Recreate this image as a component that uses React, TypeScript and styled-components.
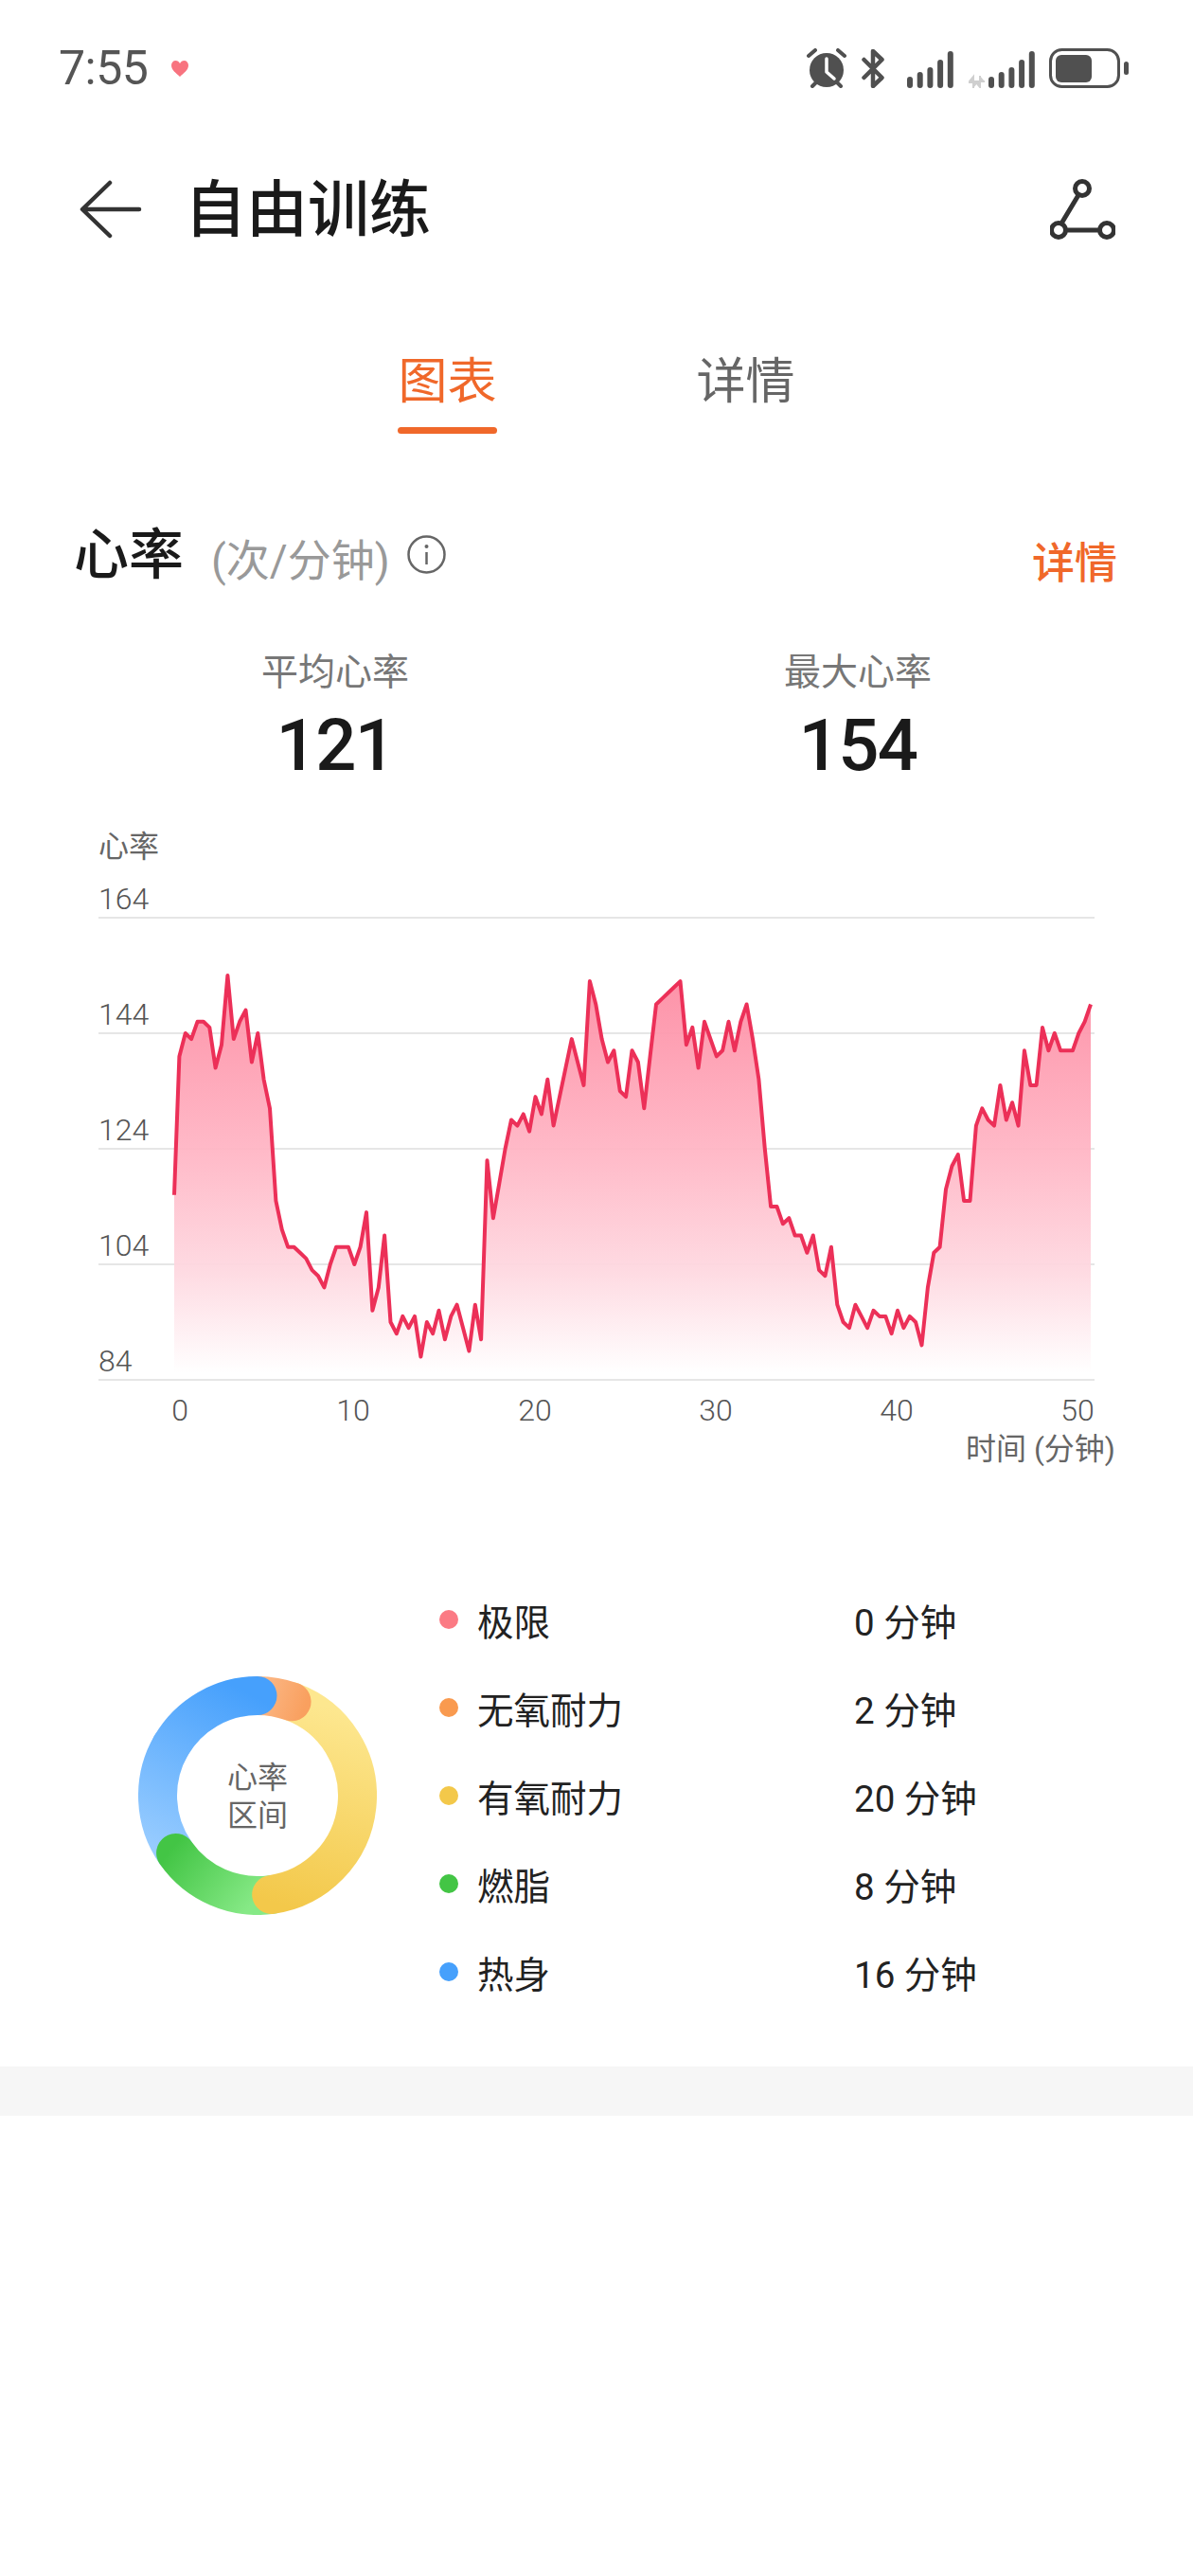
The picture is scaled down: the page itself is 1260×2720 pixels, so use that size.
import React from "react";
import styled, { createGlobalStyle } from "styled-components";

const GlobalStyle = createGlobalStyle`
  html, body {
    margin: 0;
    padding: 0;
    background: #fff;
  }
  body {
    font-family: Roboto, "Noto Sans CJK SC", sans-serif;
  }
`;

const Page = styled.div`
  width: 1260px;
  height: 2720px;
  overflow: hidden;
  background: #fff;
`;

const StatusBar = styled.div`
  height: 144px;
  display: flex;
  align-items: center;
  padding: 0 68px 0 62px;
  box-sizing: border-box;
`;

const Clock = styled.div`
  font-size: 50px;
  color: #555;
  letter-spacing: -0.5px;
  margin-right: 25px;
`;

const StatusIcons = styled.div`
  margin-left: auto;
  display: flex;
  align-items: flex-end;
`;

const NavBar = styled.div`
  height: 154px;
  display: flex;
  align-items: center;
  padding: 0 82px 0 84px;
`;

const Title = styled.h1`
  margin: 2px 0 0 45px;
  font-size: 65px;
  font-weight: 500;
  color: #1a1a1a;
  line-height: 80px;
`;

const RouteButton = styled.div`
  margin-left: auto;
  display: flex;
`;

const Tabs = styled.div`
  display: flex;
  gap: 210px;
  padding: 71px 0 0 420px;
`;

const Tab = styled.div<{ $active?: boolean }>`
  width: 105px;
  text-align: center;
  font-size: 52px;
  line-height: 70px;
  white-space: nowrap;
  color: ${(props) => (props.$active ? "#f0682a" : "#666")};
`;

const TabLine = styled.div`
  height: 7px;
  margin-top: 12px;
  border-radius: 4px;
  background: #f0682a;
`;

const SectionHead = styled.div`
  display: flex;
  align-items: center;
  height: 70px;
  margin-top: 88px;
  padding: 0 80px 0 78px;
`;

const SectionTitle = styled.div`
  font-size: 58px;
  font-weight: 500;
  color: #1a1a1a;
`;

const SectionUnit = styled.div`
  font-size: 46px;
  color: #999;
  margin: 13px 0 0 29px;
`;

const InfoIcon = styled.div`
  display: flex;
  margin: 8px 0 0 18px;
`;

const DetailLink = styled.div`
  margin: 20px 0 0 auto;
  font-size: 45px;
  font-weight: 500;
  color: #f0682a;
`;

const Stats = styled.div`
  display: grid;
  grid-template-columns: 552px 552px;
  padding: 69px 0 0 78px;
`;

const Stat = styled.div`
  text-align: center;
`;

const StatLabel = styled.div`
  font-size: 39px;
  line-height: 50px;
  color: #777;
`;

const StatValue = styled.div`
  font-size: 76px;
  font-weight: 500;
  letter-spacing: -1.5px;
  line-height: 80px;
  margin-top: 12px;
  color: #1a1a1a;
`;

const ChartSvg = styled.svg`
  display: block;
  margin-top: 43px;
`;

const AxisText = styled.text`
  font-family: Roboto, "Noto Sans CJK SC", sans-serif;
  font-size: 32px;
  font-weight: 300;
  fill: #555;
`;

const AxisCaption = styled.text`
  font-family: Roboto, "Noto Sans CJK SC", sans-serif;
  font-size: 32px;
  fill: #666;
`;

const Zones = styled.div`
  display: flex;
  align-items: center;
  padding: 103px 0 0 146px;
`;

const Donut = styled.div`
  position: relative;
  width: 252px;
  height: 252px;
  flex: none;
`;

const DonutLabel = styled.div`
  position: absolute;
  inset: 3px 0 0;
  display: flex;
  align-items: center;
  justify-content: center;
  text-align: center;
  font-size: 32px;
  line-height: 40px;
  color: #666;
`;

const Legend = styled.div`
  margin-left: 66px;
`;

const LegendRow = styled.div`
  display: flex;
  align-items: center;
  height: 93px;
`;

const Dot = styled.span<{ $color: string }>`
  width: 20px;
  height: 20px;
  border-radius: 50%;
  background: ${(props) => props.$color};
  margin-right: 20px;
`;

const LegendName = styled.div`
  width: 398px;
  font-size: 38.5px;
  color: #222;
`;

const LegendValue = styled.div`
  font-size: 38.5px;
  color: #222;
`;

const Band = styled.div`
  height: 52px;
  margin-top: 54px;
  background: #f6f6f6;
`;

const HR = [
  116, 140, 144, 143, 146, 146, 145, 138, 142, 154, 143, 146, 148, 139, 144, 136, 131, 115, 110, 107,
  107, 106, 105, 103, 102, 100, 104, 107, 107, 107, 104, 107, 113, 96, 100, 109, 94, 92, 95, 93,
  95, 88, 94, 92, 96, 91, 95, 97, 93, 89, 97, 91, 122, 112, 118, 124, 129, 128, 130, 127,
  133, 130, 136, 128, 133, 138, 143, 139, 135, 153, 149, 143, 139, 141, 134, 133, 141, 139, 131, 140,
  149, 150, 151, 152, 153, 142, 145, 138, 146, 143, 140, 141, 146, 141, 146, 149, 143, 136, 124, 114,
  114, 111, 112, 109, 109, 106, 109, 103, 102, 107, 97, 94, 93, 97, 95, 93, 96, 95, 95, 92,
  96, 93, 95, 94, 90, 100, 106, 107, 117, 121, 123, 115, 115, 128, 131, 129, 128, 135, 129, 132,
  128, 141, 135, 135, 145, 141, 144, 141, 141, 141, 144, 146, 149,
];

const points = HR.map((v, i) => {
  const x = i === 0 ? 184 : 189.4 + ((i - 1) * (1152 - 189.4)) / (HR.length - 2);
  return `${x.toFixed(1)},${(1457 - (v - 84) * 6.1).toFixed(1)}`;
});

const GRID = [
  { y: 969, label: "164" },
  { y: 1091, label: "144" },
  { y: 1213, label: "124" },
  { y: 1335, label: "104" },
  { y: 1457, label: "84" },
];

const XTICKS = [
  { x: 190, label: "0" },
  { x: 373, label: "10" },
  { x: 565, label: "20" },
  { x: 756, label: "30" },
  { x: 947, label: "40" },
  { x: 1138, label: "50" },
];

const ZONES = [
  { name: "极限", value: "0 分钟", color: "#fb7a84" },
  { name: "无氧耐力", value: "2 分钟", color: "#f99a4f" },
  { name: "有氧耐力", value: "20 分钟", color: "#f3c84a" },
  { name: "燃脂", value: "8 分钟", color: "#43c545" },
  { name: "热身", value: "16 分钟", color: "#46a0fc" },
];

// arc along the middle of the ring, degrees clockwise from the top
const arc = (from: number, to: number) => {
  const r = 105.5;
  const pt = (a: number) => {
    const t = (a * Math.PI) / 180;
    return `${(126 + r * Math.sin(t)).toFixed(2)} ${(126 - r * Math.cos(t)).toFixed(2)}`;
  };
  return `M${pt(from)} A${r} ${r} 0 ${to - from > 180 ? 1 : 0} 1 ${pt(to)}`;
};

const SignalBars = ({ x = 0 }: { x?: number }) => (
  <g fill="#505050">
    {[12, 17, 22, 30, 39].map((h, i) => (
      <rect key={h} x={x + i * 10.7} y={39 - h} width="6" height={h} rx="3" />
    ))}
  </g>
);

const App = () => {
  return (
    <Page>
      <GlobalStyle />
      <StatusBar>
        <Clock>7:55</Clock>
        <svg width="18" height="17" viewBox="0 0 18 17">
          <path d="M9 17 C5 13 0 10 0 5 C0 2 2 0 4.5 0 C6.5 0 8 1 9 3 C10 1 11.500 0 13.500 0 C16 0 18 2 18 5 C18 10 13 13 9 17Z" fill="#f8737f" />
        </svg>
        <StatusIcons>
          <svg width="42" height="42" viewBox="0 0 42 42" style={{ marginRight: 16 }}>
            <circle cx="21" cy="23" r="18" fill="#505050" />
            <path d="M21 11 V25 L29 32" fill="none" stroke="#fff" strokeWidth="3.500" strokeLinecap="round" strokeLinejoin="round" />
            <path d="M2 8 L9 2 M33 2 L40 8 M6 40 L10 36 M36 40 L32 36" stroke="#505050" strokeWidth="4" strokeLinecap="round" />
          </svg>
          <svg width="24" height="41" viewBox="0 0 24 41" style={{ marginRight: 24 }}>
            <path d="M2.500 11 L21.500 30 L12 39 V2 L21.500 11 L2.500 30" fill="none" stroke="#505050" strokeWidth="4.500" strokeLinecap="round" strokeLinejoin="round" />
          </svg>
          <svg width="49" height="39" viewBox="0 0 49 39" style={{ marginRight: 16 }}>
            <SignalBars />
          </svg>
          <svg width="70" height="39" viewBox="0 0 70 39" style={{ marginRight: 15 }}>
            <path d="M5 39 V27 L0 33 H10 M12 26 V38 L7 32 H17" fill="#cfcfcf" stroke="#cfcfcf" strokeWidth="2" />
            <SignalBars x={21} />
          </svg>
          <svg width="84" height="42" viewBox="0 0 84 42">
            <rect x="1.500" y="1.500" width="72" height="39" rx="12" fill="none" stroke="#505050" strokeWidth="3" />
            <rect x="7" y="7" width="38" height="29" rx="6" fill="#505050" />
            <rect x="79" y="14" width="5" height="14" rx="2.500" fill="#505050" />
          </svg>
        </StatusIcons>
      </StatusBar>

      <NavBar>
        <svg width="66" height="62" viewBox="0 0 66 62">
          <path d="M63 31 H4 M32 3 L3 31 L32 59" fill="none" stroke="#333" strokeWidth="4.500" strokeLinecap="round" strokeLinejoin="round" />
        </svg>
        <Title>自由训练</Title>
        <RouteButton>
          <svg width="69" height="64" viewBox="0 0 69 64">
            <g fill="none" stroke="#333" strokeWidth="5">
              <circle cx="34" cy="10" r="7.500" />
              <circle cx="9" cy="54" r="7.500" />
              <circle cx="60" cy="54" r="7.500" />
              <path d="M30 17 L12 47 M17 54 H52" strokeLinecap="round" />
            </g>
          </svg>
        </RouteButton>
      </NavBar>

      <Tabs>
        <Tab $active>
          图表
          <TabLine />
        </Tab>
        <Tab>详情</Tab>
      </Tabs>

      <SectionHead>
        <SectionTitle>心率</SectionTitle>
        <SectionUnit>(次/分钟)</SectionUnit>
        <InfoIcon>
          <svg width="41" height="41" viewBox="0 0 41 41">
            <circle cx="20.500" cy="20.500" r="19" fill="none" stroke="#666" strokeWidth="2.500" />
            <circle cx="20.500" cy="12" r="2" fill="#666" />
            <path d="M20.500 18 V31" stroke="#666" strokeWidth="2.500" />
          </svg>
        </InfoIcon>
        <DetailLink>详情</DetailLink>
      </SectionHead>

      <Stats>
        <Stat>
          <StatLabel>平均心率</StatLabel>
          <StatValue>121</StatValue>
        </Stat>
        <Stat>
          <StatLabel>最大心率</StatLabel>
          <StatValue>154</StatValue>
        </Stat>
      </Stats>

      <ChartSvg width="1260" height="690" viewBox="0 870 1260 690">
        <defs>
          <linearGradient id="hrFill" gradientUnits="userSpaceOnUse" x1="0" y1="1030" x2="0" y2="1450">
            <stop offset="0" stopColor="#fd8ba2" />
            <stop offset="0.45" stopColor="#ffb6c5" />
            <stop offset="0.75" stopColor="#fed9e1" />
            <stop offset="1" stopColor="#ffffff" />
          </linearGradient>
        </defs>
        {GRID.map((g) => (
          <g key={g.label}>
            <line x1="104" x2="1156" y1={g.y} y2={g.y} stroke="#e6e6e6" strokeWidth="2" />
            <AxisText x="104" y={g.y - 9}>
              {g.label}
            </AxisText>
          </g>
        ))}
        <polygon points={`184,1450 ${points.join(" ")} 1152,1450`} fill="url(#hrFill)" fillOpacity="0.94" />
        <polyline points={points.join(" ")} fill="none" stroke="#ec3058" strokeWidth="4" strokeLinejoin="round" />
        <AxisCaption x="104" y="905">心率</AxisCaption>
        {XTICKS.map((t) => (
          <AxisText key={t.label} x={t.x} y="1500" textAnchor="middle">
            {t.label}
          </AxisText>
        ))}
        <AxisCaption x="1178" y="1541" textAnchor="end">时间 (分钟)</AxisCaption>
      </ChartSvg>

      <Zones>
        <Donut>
          <svg width="252" height="252" viewBox="0 0 252 252">
            <defs>
              <linearGradient id="ringBlue" gradientUnits="userSpaceOnUse" x1="120" y1="20" x2="30" y2="190">
                <stop offset="0" stopColor="#46a0fc" />
                <stop offset="1" stopColor="#98ccff" />
              </linearGradient>
              <linearGradient id="ringGreen" gradientUnits="userSpaceOnUse" x1="45" y1="170" x2="125" y2="235">
                <stop offset="0" stopColor="#43c545" />
                <stop offset="1" stopColor="#86e986" />
              </linearGradient>
              <linearGradient id="ringYellow" gradientUnits="userSpaceOnUse" x1="190" y1="30" x2="130" y2="235">
                <stop offset="0" stopColor="#fde78f" />
                <stop offset="1" stopColor="#f3c84a" />
              </linearGradient>
              <linearGradient id="ringOrange" gradientUnits="userSpaceOnUse" x1="130" y1="20" x2="175" y2="35">
                <stop offset="0" stopColor="#fbb684" />
                <stop offset="1" stopColor="#f9a05f" />
              </linearGradient>
            </defs>
            <g fill="none" strokeWidth="41" strokeLinecap="round">
              <path d={arc(235, 300)} stroke="url(#ringBlue)" />
              <path d={arc(172, 235)} stroke="url(#ringGreen)" />
              <path d={arc(20, 172)} stroke="url(#ringYellow)" />
              <path d={arc(0, 20)} stroke="url(#ringOrange)" />
              <path d={arc(300, 360)} stroke="url(#ringBlue)" />
            </g>
          </svg>
          <DonutLabel>
            心率
            <br />
            区间
          </DonutLabel>
        </Donut>
        <Legend>
          {ZONES.map((z) => (
            <LegendRow key={z.name}>
              <Dot $color={z.color} />
              <LegendName>{z.name}</LegendName>
              <LegendValue>{z.value}</LegendValue>
            </LegendRow>
          ))}
        </Legend>
      </Zones>

      <Band />
    </Page>
  );
};

export default App;
